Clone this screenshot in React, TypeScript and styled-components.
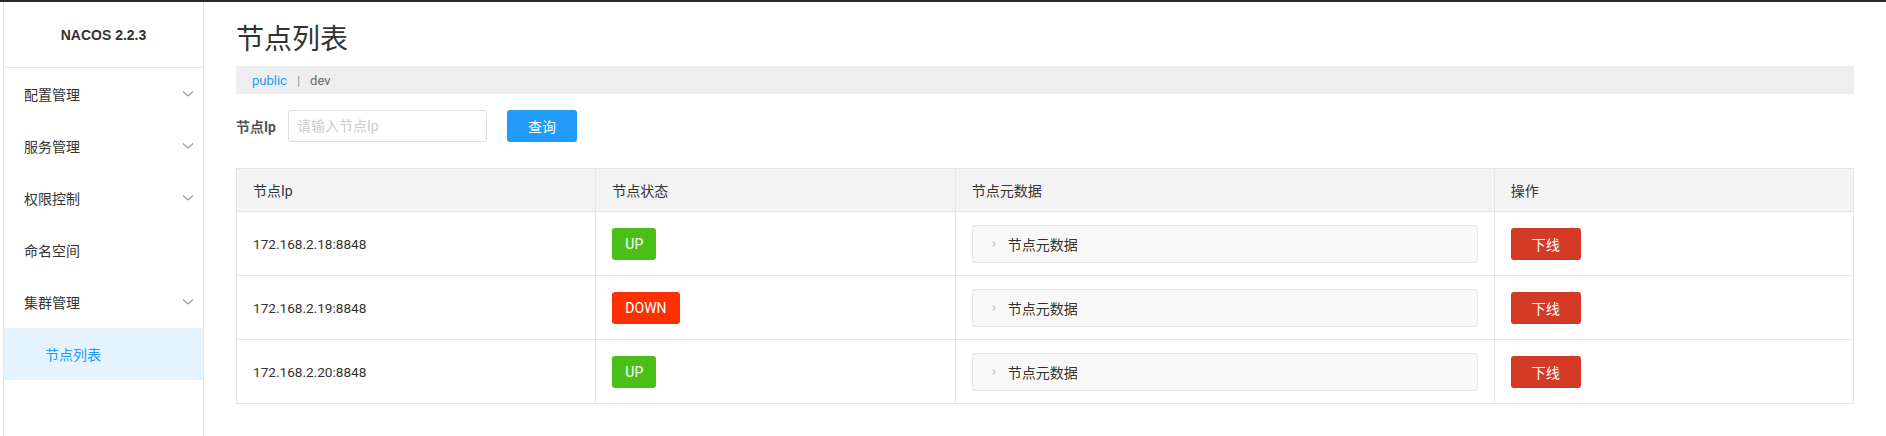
import React from 'react';
import styled, { createGlobalStyle } from 'styled-components';

const GlobalStyle = createGlobalStyle`
body {
  margin: 0;
  font-family: Roboto, "Noto Sans CJK SC", sans-serif;
  font-size: 14px;
  color: #333;
  background: #fff;
}
`

const Page = styled.div`
display: flex;
min-height: 100vh;
box-sizing: border-box;
border-top: 2px solid #24292e;
`

const Sidebar = styled.div`
width: 199px;
flex-shrink: 0;
margin-left: 3px;
border-left: 1px solid #e6e6e6;
border-right: 1px solid #e6e6e6;
`

const Logo = styled.div`
height: 65px;
display: flex;
align-items: center;
justify-content: center;
font-family: "Liberation Sans", Arial, sans-serif;
font-weight: bold;
font-size: 14px;
color: #333;
border-bottom: 1px solid #e6e6e6;
`

const MenuItem = styled.div<{sub?: boolean, active?: boolean}>`
height: 52px;
display: flex;
align-items: center;
justify-content: space-between;
padding: 0 9px 0 ${(props) => props.sub ? '41px' : '20px'};
color: ${(props) => props.active ? '#209bfa' : '#333'};
background: ${(props) => props.active ? '#e4f3fe' : 'transparent'};
`

const Main = styled.div`
flex: 1;
padding: 20px 32px 0 32px;
min-width: 0;
`

const Title = styled.h1`
margin: 0 0 8px;
font-size: 28px;
line-height: 36px;
font-weight: normal;
color: #333;
`

const Breadcrumb = styled.div`
height: 28px;
background: #eee;
display: flex;
align-items: center;
padding: 0 16px;
font-size: 13px;
color: #666;
`

const Crumb = styled.span<{link?: boolean}>`
color: ${(props) => props.link ? '#209bfa' : '#666'};
`

const Divider = styled.span`
color: #999;
margin: 0 10px;
`

const SearchRow = styled.div`
margin-top: 16px;
height: 32px;
display: flex;
align-items: center;
`

const Label = styled.label`
font-weight: bold;
color: #555;
margin-right: 12px;
`

const Input = styled.input`
width: 199px;
height: 32px;
box-sizing: border-box;
border: 1px solid #dcdee3;
border-radius: 3px;
padding: 0 8px;
font-family: inherit;
font-size: 14px;
outline: none;
&::placeholder {
  color: #ccc;
}
`

const Button = styled.button<{color: string}>`
height: 32px;
width: 70px;
border: none;
border-radius: 3px;
background: ${(props) => props.color};
color: #fff;
font-family: inherit;
font-size: 14px;
padding: 0;
`

const SearchButton = styled(Button)`
margin-left: 20px;
`

const Table = styled.div`
margin-top: 26px;
display: grid;
grid-template-columns: 2fr 2fr 3fr 2fr;
border-top: 1px solid #e6e6e6;
border-left: 1px solid #e6e6e6;
`

const Cell = styled.div<{head?: boolean}>`
height: ${(props) => props.head ? '42px' : '63px'};
background: ${(props) => props.head ? '#f4f4f4' : '#fff'};
border-right: 1px solid #e6e6e6;
border-bottom: 1px solid #e6e6e6;
padding: 0 16px;
display: flex;
align-items: center;
min-width: 0;
`

const IpText = styled.span`
font-size: 13.6px;
color: #333;
`

const Badge = styled.span<{color: string}>`
height: 32px;
padding: 0 13px;
border-radius: 3px;
background: ${(props) => props.color};
color: #fff;
display: inline-flex;
align-items: center;
`

const MetaBox = styled.div`
flex: 1;
height: 38px;
box-sizing: border-box;
border: 1px solid #e6e6e6;
border-radius: 3px;
background: #f8f8f8;
display: flex;
align-items: center;
padding-left: 19px;
gap: 12px;
`

const ChevronDown = () => (
  <svg width="12" height="8" viewBox="0 0 12 8">
    <polyline points="1,1.5 6,6 11,1.5" fill="none" stroke="#999" strokeWidth="1.1" />
  </svg>
)

const ChevronRight = () => (
  <svg width="4" height="6" viewBox="0 0 4 6">
    <polyline points="1,0.5 3,3 1,5.5" fill="none" stroke="#aaa" strokeWidth="1" />
  </svg>
)

const menus = [
  { name: '配置管理', arrow: true },
  { name: '服务管理', arrow: true },
  { name: '权限控制', arrow: true },
  { name: '命名空间', arrow: false },
  { name: '集群管理', arrow: true },
]

const nodes = [
  { ip: '172.168.2.18:8848', state: 'UP' },
  { ip: '172.168.2.19:8848', state: 'DOWN' },
  { ip: '172.168.2.20:8848', state: 'UP' },
]

const App: React.FC = () => {
  return (
    <Page>
      <GlobalStyle />
      <Sidebar>
        <Logo>NACOS 2.2.3</Logo>
        {menus.map(m => (
          <MenuItem key={m.name}>
            {m.name}
            {m.arrow && <ChevronDown />}
          </MenuItem>
        ))}
        <MenuItem sub active>节点列表</MenuItem>
      </Sidebar>
      <Main>
        <Title>节点列表</Title>
        <Breadcrumb>
          <Crumb link>public</Crumb>
          <Divider>|</Divider>
          <Crumb>dev</Crumb>
        </Breadcrumb>
        <SearchRow>
          <Label>节点Ip</Label>
          <Input placeholder="请输入节点Ip" />
          <SearchButton color="#209bfa">查询</SearchButton>
        </SearchRow>
        <Table>
          <Cell head>节点Ip</Cell>
          <Cell head>节点状态</Cell>
          <Cell head>节点元数据</Cell>
          <Cell head>操作</Cell>
          {nodes.map(n => (
            <React.Fragment key={n.ip}>
              <Cell><IpText>{n.ip}</IpText></Cell>
              <Cell>
                <Badge color={n.state === 'UP' ? '#4bbe17' : '#ff3000'}>{n.state}</Badge>
              </Cell>
              <Cell>
                <MetaBox>
                  <ChevronRight />
                  节点元数据
                </MetaBox>
              </Cell>
              <Cell>
                <Button color="#d33b26">下线</Button>
              </Cell>
            </React.Fragment>
          ))}
        </Table>
      </Main>
    </Page>
  )
}

export default App;
